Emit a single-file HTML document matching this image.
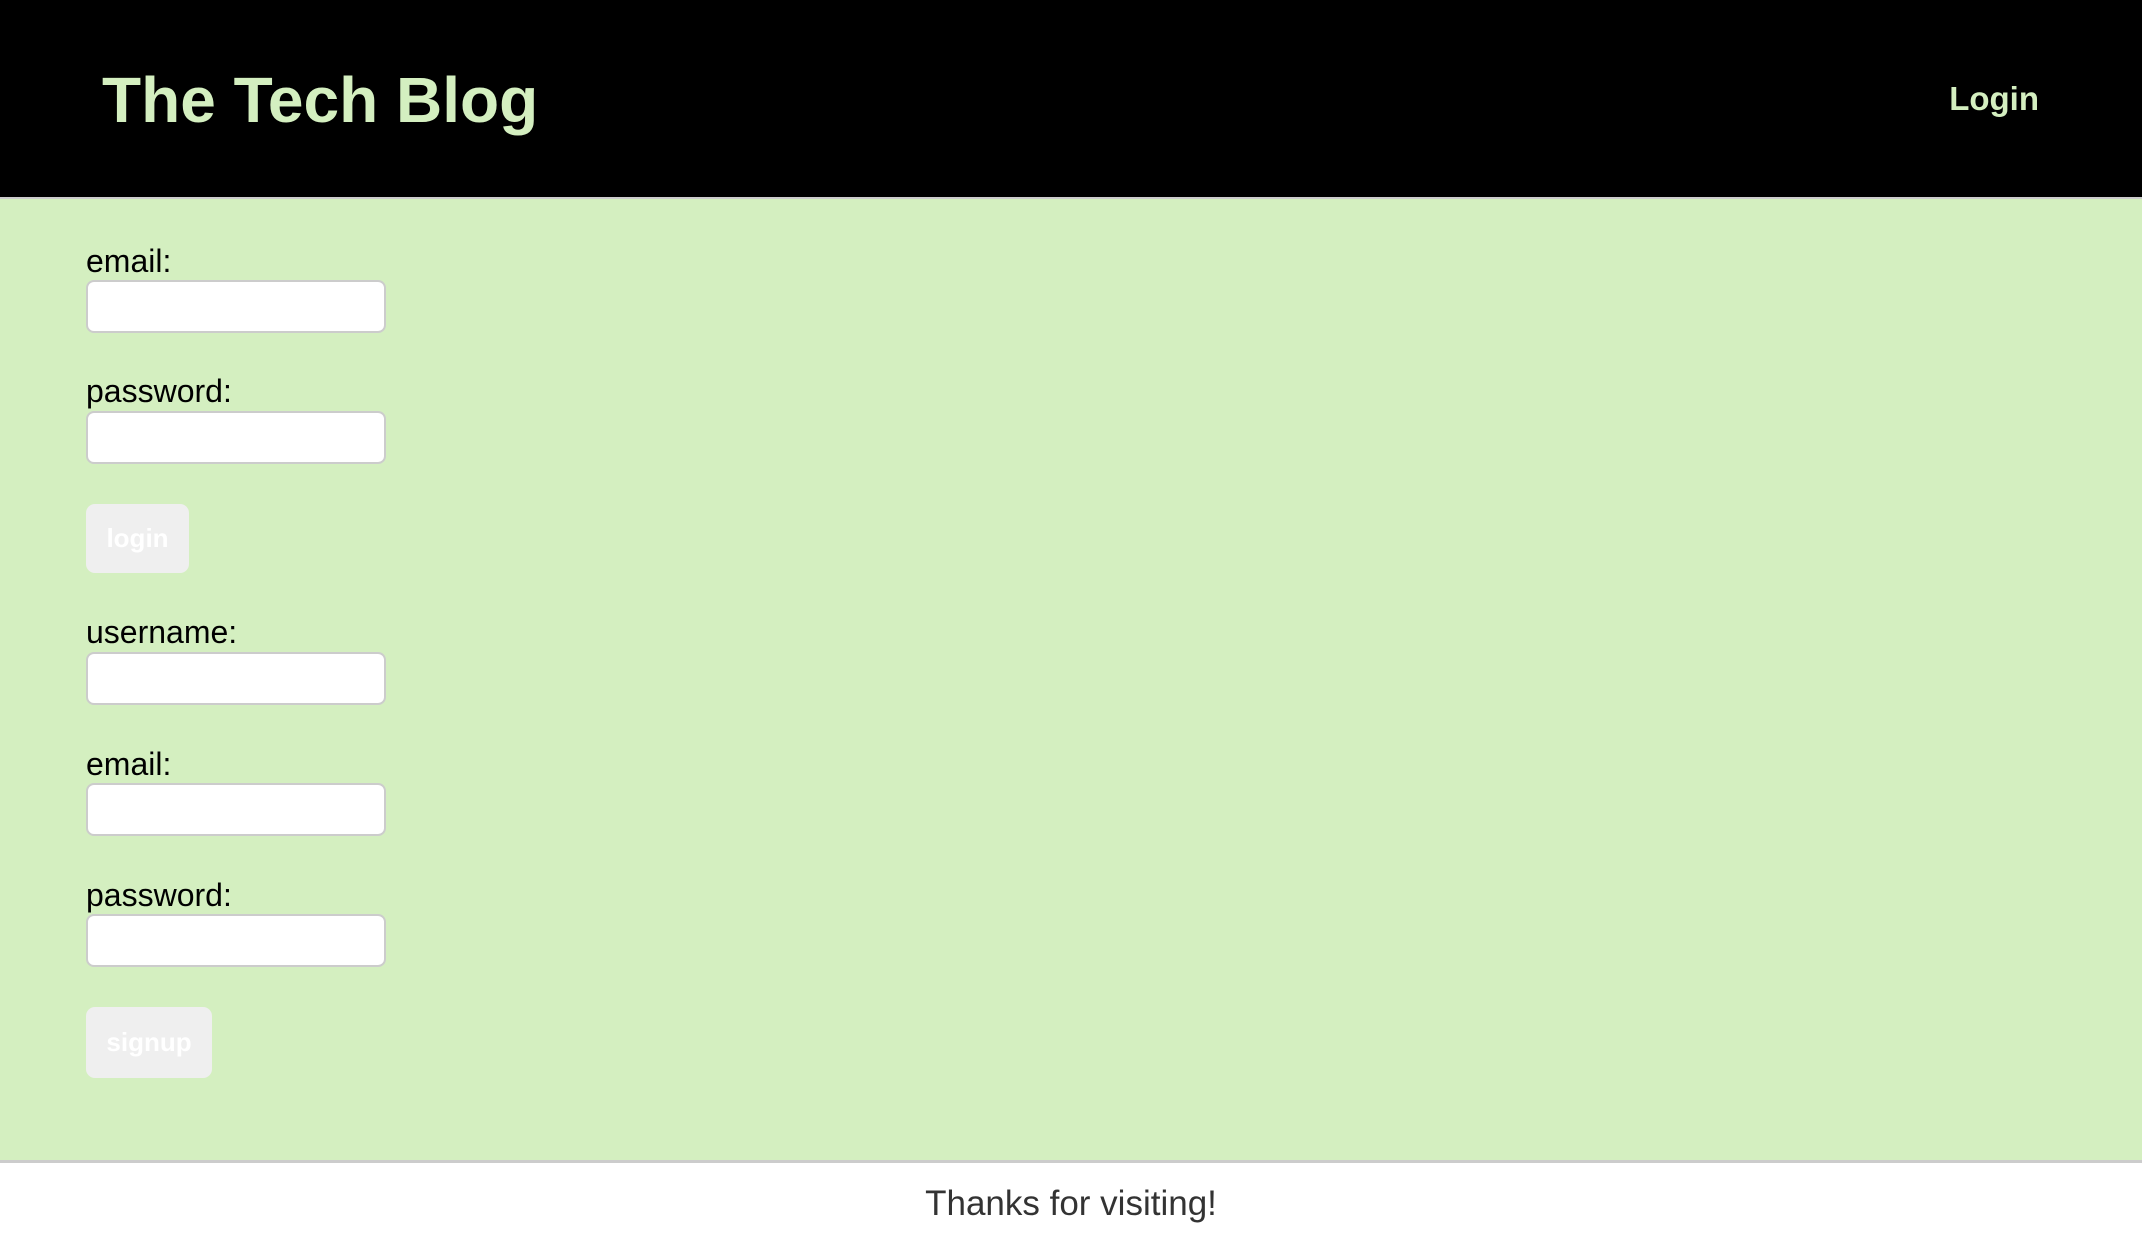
<!DOCTYPE html>
<html><head><meta charset="utf-8"><style>
*{margin:0;padding:0;box-sizing:border-box}
body{width:2142px;height:1244px;position:relative;background:#fff;font-family:"Liberation Sans",Arial,sans-serif;overflow:hidden}
.hdr{position:absolute;left:0;top:0;width:2142px;height:199px;background:#000;border-bottom:2px solid #ccc}
.main{position:absolute;left:0;top:199px;width:2142px;height:964px;background:#d4efc0;border-bottom:3px solid #ccc}
.t{position:absolute;white-space:nowrap}
.title{left:102px;top:68px;font-size:64px;line-height:64px;font-weight:bold;color:#d4efc0}
.nav{right:103px;top:82px;font-size:33px;line-height:33px;font-weight:bold;color:#d4efc0}
.lbl{left:86px;font-size:32px;line-height:32px;color:#000}
.inp{position:absolute;left:86px;width:300px;height:53px;background:#fff;border:2px solid #ccc;border-radius:8px}
.btn{position:absolute;left:86px;background:#efefef;border-radius:9px;color:#fff;font-weight:bold;font-size:26px;display:flex;align-items:center;justify-content:center}
.foot{left:0;width:2142px;text-align:center;top:1186px;font-size:35px;line-height:35px;color:#333}
</style></head><body>
<div class="hdr"></div>
<div class="main"></div>
<div class="t title">The Tech Blog</div>
<div class="t nav">Login</div>

<div class="t lbl" style="top:245px">email:</div>
<div class="inp" style="top:280px"></div>
<div class="t lbl" style="top:375px">password:</div>
<div class="inp" style="top:411px"></div>
<div class="btn" style="top:504px;width:103px;height:69px">login</div>

<div class="t lbl" style="top:616px">username:</div>
<div class="inp" style="top:652px"></div>
<div class="t lbl" style="top:748px">email:</div>
<div class="inp" style="top:783px"></div>
<div class="t lbl" style="top:879px">password:</div>
<div class="inp" style="top:914px"></div>
<div class="btn" style="top:1007px;width:126px;height:71px">signup</div>

<div class="t foot">Thanks for visiting!</div>
</body></html>
